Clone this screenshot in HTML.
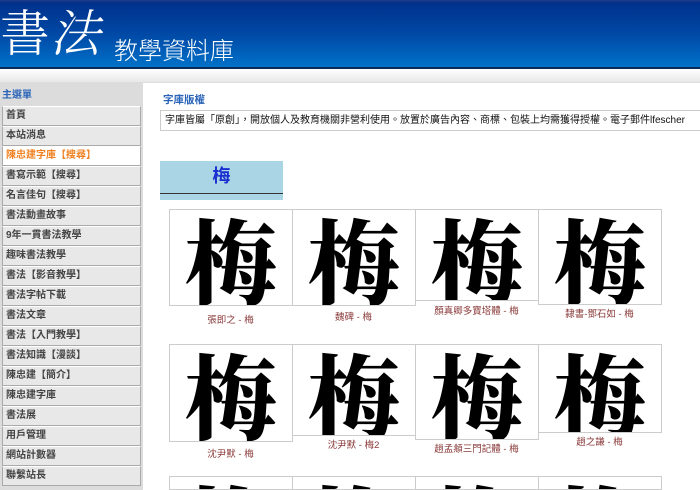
<!DOCTYPE html>
<html><head><meta charset="utf-8"><style>
*{margin:0;padding:0;box-sizing:border-box}
html,body{width:700px;height:490px;overflow:hidden}
body{background:#fff;font-family:"Liberation Sans","Noto Sans CJK TC",sans-serif;position:relative}
.hdr{position:absolute;left:0;top:0;width:700px;height:69px;background:linear-gradient(#1f3a88 0,#00318c 3px,#004aa6 35px,#0070c8 66px);border-bottom:2px solid #0a2a5a;overflow:hidden}
.strip{position:absolute;left:0;top:69px;width:700px;height:14px;background:linear-gradient(#fff,#e8e8e8);border-bottom:1px solid #ddd}
.logo{position:absolute;left:0px;top:-6px;color:#fff;font-family:"Noto Serif CJK SC",serif;font-size:50px;font-weight:300;white-space:nowrap}
.sub{position:absolute;left:114px;top:31px;color:#fff;font-size:24px;font-family:"Noto Sans CJK TC",sans-serif;font-weight:300}
.side{position:absolute;left:0;top:83px;width:143px;height:407px;background:#dcdcdc}
.side .t{position:absolute;left:2px;top:3px;color:#2a64b8;font-size:10px;font-weight:bold}
.menu{position:absolute;left:2px;top:106px;width:139px}
.menu div{height:20px;border:1px solid #aaa;border-top-color:#fff;background:#e8e8e8;font-size:10px;line-height:18px;padding-left:3px;color:#444;font-weight:bold}
.menu div.on{background:#fff;color:#f08020}
.title{position:absolute;left:163px;top:92px;color:#2a64b8;font-size:10.5px;font-weight:bold}
.box{position:absolute;left:160px;top:110px;width:540px;height:21px;border:1px solid #ccc;border-right:none;font-size:10px;line-height:19px;padding-left:4px;color:#111;white-space:nowrap;overflow:hidden;background:#fff}
.mei{position:absolute;left:160px;top:161px;width:123px;height:39px;background:#a9d5e5}
.mei span{position:absolute;left:0;width:123px;top:1px;text-align:center;color:#1b2ed0;font-size:18px;font-weight:bold}
.mei i{position:absolute;left:0;top:32px;width:123px;height:1px;background:#333}
.c{position:absolute;width:124px;height:96px;border:1px solid #ccc;background:#fff;overflow:hidden;text-align:center;font-family:"Noto Serif CJK TC","Noto Serif CJK SC",serif;font-weight:900;font-size:92px;line-height:96px;color:#000}
.cap{position:absolute;width:123px;text-align:center;font-size:9.5px;color:#8a3a3a}
</style></head><body>
<div class="hdr"><div class="logo">書<span style="font-style:italic">法</span></div><div class="sub">教學資料庫</div></div>
<div class="strip"></div>
<div class="side"><div class="t">主選單</div></div>
<div class="menu">
<div>首頁</div><div>本站消息</div><div class="on">陳忠建字庫【搜尋】</div><div>書寫示範【搜尋】</div><div>名言佳句【搜尋】</div><div>書法動畫故事</div><div>9年一貫書法教學</div><div>趣味書法教學</div><div>書法【影音教學】</div><div>書法字帖下載</div><div>書法文章</div><div>書法【入門教學】</div><div>書法知識【漫談】</div><div>陳忠建【簡介】</div><div>陳忠建字庫</div><div>書法展</div><div>用戶管理</div><div>網站計數器</div><div>聯繫站長</div>
</div>
<div class="title">字庫版權</div>
<div class="box">字庫皆屬「原創」，開放個人及教育機關非營利使用。放置於廣告內容、商標、包裝上均需獲得授權。電子郵件lfescher</div>
<div class="mei"><span>梅</span><i></i></div>
<div class="c" style="left:169px;top:209px;height:97px">梅</div>
<div class="c" style="left:292px;top:209px;height:97px">梅</div>
<div class="c" style="left:415px;top:209px;height:92px">梅</div>
<div class="c" style="left:538px;top:209px;height:96px">梅</div>
<div class="cap" style="left:169px;top:312px">張即之 - 梅</div>
<div class="cap" style="left:292px;top:309px">魏碑 - 梅</div>
<div class="cap" style="left:415px;top:303px">顏真卿多寶塔體 - 梅</div>
<div class="cap" style="left:538px;top:306px">隸書-鄧石如 - 梅</div>
<div class="c" style="left:169px;top:344px;height:98px">梅</div>
<div class="c" style="left:292px;top:344px;height:92px">梅</div>
<div class="c" style="left:415px;top:344px;height:96px">梅</div>
<div class="c" style="left:538px;top:344px;height:89px">梅</div>
<div class="cap" style="left:169px;top:446px">沈尹默 - 梅</div>
<div class="cap" style="left:292px;top:437px">沈尹默 - 梅2</div>
<div class="cap" style="left:415px;top:441px">趙孟頫三門記體 - 梅</div>
<div class="cap" style="left:538px;top:434px">趙之謙 - 梅</div>
<div class="c" style="left:169px;top:476px;height:14px;line-height:96px">梅</div>
<div class="c" style="left:292px;top:476px;height:14px;line-height:96px">梅</div>
<div class="c" style="left:415px;top:476px;height:14px;line-height:96px">梅</div>
<div class="c" style="left:538px;top:476px;height:14px;line-height:96px">梅</div>
</body></html>
